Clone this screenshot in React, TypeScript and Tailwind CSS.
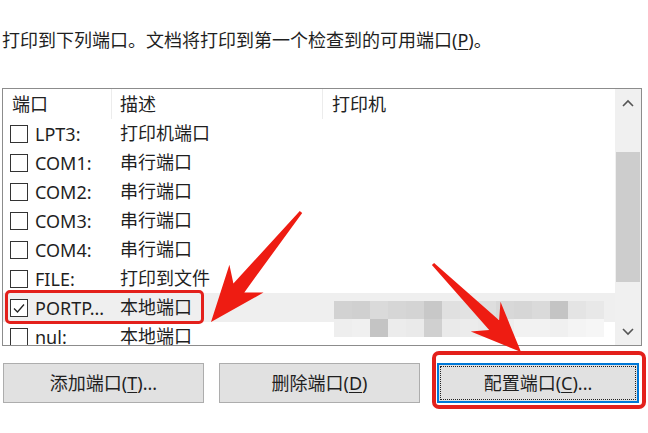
import React from 'react'

const rows = [
  { port: 'LPT3:', desc: '打印机端口' },
  { port: 'COM1:', desc: '串行端口' },
  { port: 'COM2:', desc: '串行端口' },
  { port: 'COM3:', desc: '串行端口' },
  { port: 'COM4:', desc: '串行端口' },
  { port: 'FILE:', desc: '打印到文件' },
  { port: 'PORTP...', desc: '本地端口', checked: true },
  { port: 'nul:', desc: '本地端口' },
]

// blurred printer name (mosaic)
const mosaicTop = ['#d2d2d2', '#d0d0d0', '#dadada', '#d6d6d6', '#d4d4d4', '#c8c8c8', '#e0e0e0', '#e2e2e2', '#dedede', '#d8d8d8', '#d6d6d6', '#dadada', '#c4c4c4', '#e4e4e4', '#e8e8e8']
const mosaicBottom = ['#eeeeee', '#f0f0f0', '#c4c4c4', '#ececec', '#eaeaea', '#d0d0d0', '#eaeaea', '#ececec', '#eaeaea', '#eeeeee', '#f2f2f2', '#f2f2f2', '#f0f0f0', '#f4f4f4', '#f6f6f6']

function arrowPoints(tx: number, ty: number, px: number, py: number, hl: number, hw: number, sw: number, tw: number) {
  const len = Math.hypot(px - tx, py - ty)
  const dx = (px - tx) / len
  const dy = (py - ty) / len
  const nx = -dy
  const ny = dx
  const bx = px - dx * hl
  const by = py - dy * hl
  const pts = [
    [tx + nx * tw, ty + ny * tw],
    [bx + nx * sw + dx * 6, by + ny * sw + dy * 6],
    [bx + nx * hw - dx * 6, by + ny * hw - dy * 6],
    [px, py],
    [bx - nx * hw - dx * 6, by - ny * hw - dy * 6],
    [bx - nx * sw + dx * 6, by - ny * sw + dy * 6],
    [tx - nx * tw, ty - ny * tw],
  ]
  return pts.map((p) => p.map((v) => v.toFixed(1)).join(',')).join(' ')
}

function Checkbox({ checked }: { checked?: boolean }) {
  return (
    <div className="w-[18px] h-[18px] border border-[#333] bg-white flex items-center justify-center shrink-0">
      {checked && (
        <svg width="14" height="14" viewBox="0 0 14 14">
          <path d="M2 7.5 L5.5 11 L12 3.5" fill="none" stroke="#222" strokeWidth="1.3" />
        </svg>
      )}
    </div>
  )
}

function Button({ children, focused }: { children: React.ReactNode; focused?: boolean }) {
  return (
    <div
      className={
        focused
          ? 'w-[202px] h-[40px] bg-[#e1e1e1] border-2 border-[#0078d7] p-[1px]'
          : 'w-[201px] h-[40px] bg-[#e1e1e1] border border-[#adadad]'
      }
    >
      <div
        className={
          focused
            ? 'w-full h-full border border-dotted border-[#222] flex items-center justify-center text-[18px]'
            : 'w-full h-full flex items-center justify-center text-[18px]'
        }
      >
        {children}
      </div>
    </div>
  )
}

export default function App() {
  return (
    <div className="relative w-[648px] h-[433px] bg-white overflow-hidden text-[#1f1f1f] font-['Noto_Sans','Noto_Sans_CJK_SC',sans-serif]">
      <p className="pt-[29px] pl-[2px] text-[18px] leading-[22px]">
        打印到下列端口。文档将打印到第一个检查到的可用端口(<span className="underline underline-offset-2">P</span>)。
      </p>

      <div className="mt-[37px] ml-[2px] w-[640px] h-[258px] border border-[#8c8c8c] flex">
        <div className="w-[612px] overflow-hidden">
          <div className="h-[30px] flex text-[18px] text-[#222]">
            <div className="w-[109px] pl-[9px] border-r border-[#ececec] flex items-center">端口</div>
            <div className="w-[211px] pl-[8px] border-r border-[#ececec] flex items-center">描述</div>
            <div className="flex-1 pl-[9px] flex items-center">打印机</div>
          </div>
          {rows.map((r) => (
            <div key={r.port} className={r.checked ? 'h-[29px] flex items-center text-[18px] bg-[#efefef]' : 'h-[29px] flex items-center text-[18px]'}>
              <div className="w-[109px] pl-[7px] flex items-center gap-[7px]">
                <Checkbox checked={r.checked} />
                <span className="leading-none">{r.port}</span>
              </div>
              <div className="w-[211px] pl-[8px]">{r.desc}</div>
              <div className="flex-1 h-full relative">
                {r.checked && (
                  <div className="absolute left-[11px] top-[8px] w-[270px]">
                    <div className="flex">
                      {mosaicTop.map((c, i) => (
                        <div key={i} className="w-[18px] h-[18px]" style={{ background: c }} />
                      ))}
                    </div>
                    <div className="flex">
                      {mosaicBottom.map((c, i) => (
                        <div key={i} className="w-[18px] h-[18px]" style={{ background: c }} />
                      ))}
                    </div>
                  </div>
                )}
              </div>
            </div>
          ))}
        </div>
        <div className="flex-1 bg-[#f0f0f0] flex flex-col">
          <div className="h-[27px] flex items-center justify-center">
            <svg width="12" height="8" viewBox="0 0 12 8">
              <path d="M1 7 L6 2 L11 7" fill="none" stroke="#555" strokeWidth="1.6" />
            </svg>
          </div>
          <div className="mt-[36px] mx-[1px] h-[130px] bg-[#cdcdcd]" />
          <div className="flex-1" />
          <div className="h-[27px] flex items-center justify-center">
            <svg width="12" height="8" viewBox="0 0 12 8">
              <path d="M1 1 L6 6 L11 1" fill="none" stroke="#555" strokeWidth="1.6" />
            </svg>
          </div>
        </div>
      </div>

      <div className="mt-[17px] flex pl-[3px]">
        <Button>
          添加端口(<span className="underline underline-offset-2">T</span>)...
        </Button>
        <div className="ml-[15px]">
          <Button>
            删除端口(<span className="underline underline-offset-2">D</span>)
          </Button>
        </div>
        <div className="ml-[17px]">
          <Button focused>
            配置端口(<span className="underline underline-offset-2">C</span>)...
          </Button>
        </div>
      </div>

      {/* annotations */}
      <div className="absolute left-[5px] top-[290px] w-[199px] h-[34px] border-[3px] border-[#e3201b] rounded-[5px]" />
      <div className="absolute left-[432px] top-[351px] w-[214px] h-[58px] border-[4px] border-[#e3201b] rounded-[7px]" />
      <svg className="absolute left-0 top-0 pointer-events-none" width="648" height="433">
        <polygon points={arrowPoints(301, 212, 211, 322, 50, 22, 7, 1.5)} fill="#ee1c12" />
        <polygon points={arrowPoints(433, 264, 521, 352, 44, 21, 7, 1.5)} fill="#ee1c12" />
      </svg>
    </div>
  )
}
